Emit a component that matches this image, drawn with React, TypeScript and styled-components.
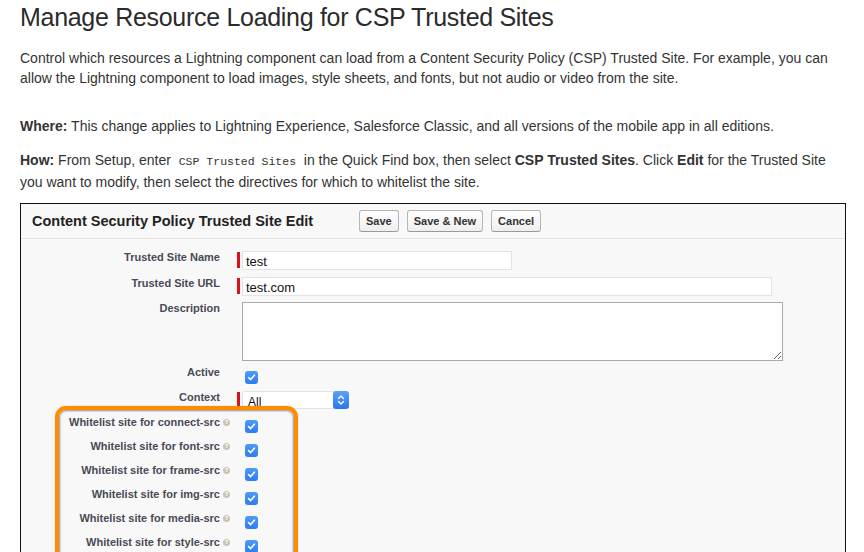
import React from "react";
import styled, { createGlobalStyle } from "styled-components";

const GlobalStyle = createGlobalStyle`
  html, body {
    margin: 0;
    padding: 0;
    background: #ffffff;
  }
  body {
    font-family: "Liberation Sans", Arial, sans-serif;
    color: #333333;
    overflow: hidden;
  }
`;

const LABEL_COLOR = "#4a4a56";
const REQUIRED_RED = "#d2141c";
const FORM_BG = "#f8f8f8";

const Page = styled.div`
  width: 826px;
  padding: 0 0 0 20px;
  height: 552px;
  overflow: hidden;
`;

const Title = styled.h1`
  margin: 0;
  font-size: 25px;
  line-height: 34px;
  font-weight: normal;
  color: #2b2b2b;
  letter-spacing: -0.3px;
`;

interface ParaProps {
  gap: number;
}
const Para = styled.p<ParaProps>`
  margin: ${({ gap }) => gap}px 0 0 0;
  font-size: 14px;
  line-height: 20px;
  color: #333333;
`;

const Code = styled.code`
  font-family: "Liberation Mono", "DejaVu Sans Mono", monospace;
  font-size: 11.5px;
  color: #333333;
`;

const Shot = styled.div`
  margin-top: 11px;
  border: 1px solid #111111;
  background: ${FORM_BG};
  height: 400px;
`;

const ShotHeader = styled.div`
  display: flex;
  align-items: center;
  height: 34px;
  padding-left: 11px;
  border-bottom: 1px solid #e2e2e2;
`;

const ShotTitle = styled.div`
  width: 327px;
  font-size: 14.5px;
  font-weight: bold;
  color: #222222;
`;

const ButtonGroup = styled.div`
  display: flex;
  gap: 8px;
`;

const Button = styled.div`
  height: 20px;
  padding: 0 6px;
  display: flex;
  align-items: center;
  border: 1px solid #b6b6b6;
  border-bottom-color: #9a9a9a;
  border-radius: 3px;
  background: linear-gradient(#ffffff, #eeeeee);
  font-size: 11px;
  font-weight: bold;
  color: #333333;
`;

const Form = styled.div`
  padding-top: 12px;
  display: flex;
  flex-direction: column;
`;

interface RowProps {
  labelWidth: number;
  height: number;
  after?: number;
}
const Row = styled.div<RowProps>`
  display: grid;
  grid-template-columns: ${({ labelWidth }) => labelWidth}px 17px 1fr;
  height: ${({ height }) => height}px;
  margin-bottom: ${({ after = 0 }) => after}px;
`;

const Label = styled.div`
  text-align: right;
  font-size: 11px;
  line-height: 13px;
  font-weight: bold;
  color: ${LABEL_COLOR};
  white-space: nowrap;
`;

const HelpSlot = styled.div`
  padding: 3px 0 0 3px;
`;

const HelpIcon = styled.span`
  display: flex;
  align-items: center;
  justify-content: center;
  width: 7px;
  height: 7px;
  border-radius: 50%;
  background: #cdc4b4;
  color: #ffffff;
  font-size: 6px;
  font-weight: bold;
  line-height: 7px;
`;

const Value = styled.div`
  display: flex;
  align-items: flex-start;
`;

const RequiredBar = styled.span`
  width: 3px;
  height: 16px;
  margin: 1px 2px 0 0;
  background: ${REQUIRED_RED};
`;

interface InputProps {
  width: number;
}
const TextInput = styled.div<InputProps>`
  box-sizing: border-box;
  width: ${({ width }) => width}px;
  height: 19px;
  padding: 2px 4px 0 3px;
  border: 1px solid #e3e3e3;
  background: #ffffff;
  font-size: 13px;
  line-height: 16px;
  color: #111111;
`;

const TextArea = styled.textarea`
  box-sizing: border-box;
  margin: 0 0 0 5px;
  width: 541px;
  height: 59px;
  border: 1px solid #a9a9a9;
  background: #ffffff;
  font-family: inherit;
`;

const Select = styled.div`
  box-sizing: border-box;
  display: flex;
  width: 107px;
  height: 18px;
  background: #ffffff;
  border: 1px solid #e3e3e3;
  border-radius: 3px;
`;

const SelectText = styled.div`
  flex: 1;
  padding: 3px 0 0 5px;
  font-size: 12px;
  line-height: 14px;
  color: #111111;
`;

const Stepper = styled.div`
  width: 16px;
  margin: -1px -1px -1px 0;
  border-radius: 3px;
  background: linear-gradient(#5aa2fa, #2a76ea);
  display: flex;
  align-items: center;
  justify-content: center;
`;

interface CheckProps {
  top: number;
}
const Check = styled.span<CheckProps>`
  display: flex;
  align-items: center;
  justify-content: center;
  width: 13px;
  height: 13px;
  margin: ${({ top }) => top}px 0 0 8px;
  border-radius: 3px;
  background: linear-gradient(#4e9bfb, #2c7cf0);
`;

const Highlight = styled.div`
  margin: -3px 0 0 34px;
  width: 235px;
  padding-top: 6px;
  border: 4px solid #ff8c00;
  border-radius: 11px;
  box-shadow: inset 0 0 2px 1px rgba(60, 60, 60, 0.55),
    0 0 1px rgba(255, 140, 0, 0.7);
  display: flex;
  flex-direction: column;
`;

const CheckMark = () => (
  <svg width="9" height="9" viewBox="0 0 9 9">
    <path
      d="M1.6 4.7 L3.6 6.6 L7.4 2.2"
      fill="none"
      stroke="#ffffff"
      strokeWidth="1.6"
      strokeLinecap="round"
      strokeLinejoin="round"
    />
  </svg>
);

const Checkbox = ({ top }: { top: number }) => (
  <Check top={top}>
    <CheckMark />
  </Check>
);

const StepperArrows = () => (
  <svg width="8" height="12" viewBox="0 0 8 12">
    <path
      d="M1.5 4.5 L4 2 L6.5 4.5 M1.5 7.5 L4 10 L6.5 7.5"
      fill="none"
      stroke="#ffffff"
      strokeWidth="1.4"
      strokeLinecap="round"
      strokeLinejoin="round"
    />
  </svg>
);

const DIRECTIVES = [
  "connect-src",
  "font-src",
  "frame-src",
  "img-src",
  "media-src",
  "style-src",
];

const App = (): React.ReactElement => {
  return (
    <Page>
      <GlobalStyle />
      <Title>Manage Resource Loading for CSP Trusted Sites</Title>
      <Para gap={14}>
        Control which resources a Lightning component can load from a Content
        Security Policy (CSP) Trusted Site. For example, you can allow the
        Lightning component to load images, style sheets, and fonts, but not
        audio or video from the site.
      </Para>
      <Para gap={28}>
        <b>Where:</b> This change applies to Lightning Experience, Salesforce
        Classic, and all versions of the mobile app in all editions.
      </Para>
      <Para gap={14}>
        <b>How:</b> From Setup, enter&nbsp; <Code>CSP Trusted Sites</Code>{" "}
        &nbsp;in the Quick Find box, then select <b>CSP Trusted Sites</b>.
        Click <b>Edit</b> for the Trusted Site you want to modify, then select
        the directives for which to whitelist the site.
      </Para>

      <Shot>
        <ShotHeader>
          <ShotTitle>Content Security Policy Trusted Site Edit</ShotTitle>
          <ButtonGroup>
            <Button>Save</Button>
            <Button>Save &amp; New</Button>
            <Button>Cancel</Button>
          </ButtonGroup>
        </ShotHeader>

        <Form>
          <Row labelWidth={199} height={20} after={6}>
            <Label>Trusted Site Name</Label>
            <div />
            <Value>
              <RequiredBar />
              <TextInput width={270}>test</TextInput>
            </Value>
          </Row>
          <Row labelWidth={199} height={20} after={5}>
            <Label>Trusted Site URL</Label>
            <div />
            <Value>
              <RequiredBar />
              <TextInput width={530}>test.com</TextInput>
            </Value>
          </Row>
          <Row labelWidth={199} height={59} after={5}>
            <Label>Description</Label>
            <div />
            <Value>
              <TextArea readOnly />
            </Value>
          </Row>
          <Row labelWidth={199} height={20} after={5}>
            <Label>Active</Label>
            <div />
            <Value>
              <Checkbox top={5} />
            </Value>
          </Row>
          <Row labelWidth={199} height={18}>
            <Label>Context</Label>
            <div />
            <Value>
              <RequiredBar />
              <Select>
                <SelectText>All</SelectText>
                <Stepper>
                  <StepperArrows />
                </Stepper>
              </Select>
            </Value>
          </Row>

          <Highlight>
            {DIRECTIVES.map((d) => (
              <Row key={d} labelWidth={161} height={24}>
                <Label>Whitelist site for {d}</Label>
                <HelpSlot>
                  <HelpIcon>?</HelpIcon>
                </HelpSlot>
                <Value>
                  <Checkbox top={4} />
                </Value>
              </Row>
            ))}
          </Highlight>
        </Form>
      </Shot>
    </Page>
  );
};

export default App;
